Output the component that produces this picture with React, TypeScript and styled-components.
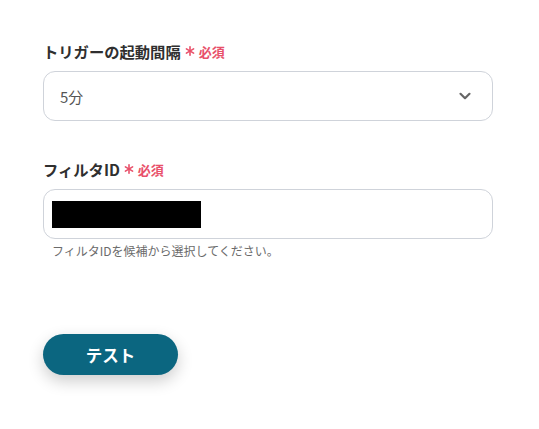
import * as React from 'react';
import styled, { createGlobalStyle } from 'styled-components';

const GlobalStyle = createGlobalStyle`
  body {
    margin: 0;
    background: #fff;
    font-family: "Noto Sans CJK JP", "Noto Sans", sans-serif;
  }
`;

const Page = styled.div`
  width: 539px;
  height: 429px;
  box-sizing: border-box;
  padding: 41px 46px 0 43px;
  display: flex;
  flex-direction: column;
`;

const Field = styled.div<{ $gap?: number }>`
  display: flex;
  flex-direction: column;
  margin-bottom: ${(p) => p.$gap ?? 0}px;
`;

const Label = styled.div`
  display: flex;
  align-items: center;
  height: 20px;
  margin-bottom: 10px;
  font-size: 15.3px;
  font-weight: 700;
  color: #2f2f2f;
`;

const Required = styled.span`
  display: inline-flex;
  align-items: center;
  gap: 4px;
  margin-left: 4px;
  color: #e8506a;
  font-size: 13px;
  font-weight: 700;
`;

const Box = styled.div`
  height: 50px;
  box-sizing: border-box;
  border: 1px solid #cfd3da;
  border-radius: 12px;
  display: flex;
  align-items: center;
  justify-content: space-between;
  padding: 0 20px 0 16px;
  background: #fff;
`;

const Value = styled.span`
  font-size: 15px;
  color: #555;
`;

const Masked = styled.div`
  width: 149px;
  height: 27px;
  background: #000;
  margin-left: -8px;
`;

const Help = styled.div`
  margin-top: 3px;
  padding-left: 9px;
  font-size: 12px;
  line-height: 18px;
  color: #6b6b6b;
`;

const Button = styled.button`
  width: 135px;
  height: 41px;
  border: none;
  border-radius: 21px;
  background: #0b6680;
  color: #fff;
  font-family: inherit;
  font-size: 16.5px;
  font-weight: 700;
  box-shadow: 0 6px 16px rgba(0, 0, 0, 0.2);
  cursor: pointer;
`;

const Star = () => (
  <svg width="10" height="10" viewBox="0 0 10 10">
    <g stroke="#e8506a" strokeWidth="1.6" strokeLinecap="round">
      <line x1="5" y1="0.8" x2="5" y2="9.2" />
      <line x1="1.4" y1="2.9" x2="8.6" y2="7.1" />
      <line x1="1.4" y1="7.1" x2="8.6" y2="2.9" />
    </g>
  </svg>
);

const Chevron = () => (
  <svg width="14" height="14" viewBox="0 0 14 14">
    <path d="M2.5 4.8 L7 9.2 L11.5 4.8" fill="none" stroke="#666" strokeWidth="2.2" strokeLinecap="round" strokeLinejoin="round" />
  </svg>
);

export default function App() {
  return (
    <Page>
      <GlobalStyle />
      <Field $gap={38}>
        <Label>
          トリガーの起動間隔
          <Required>
            <Star />必須
          </Required>
        </Label>
        <Box>
          <Value>5分</Value>
          <Chevron />
        </Box>
      </Field>
      <Field $gap={74}>
        <Label>
          フィルタID
          <Required>
            <Star />必須
          </Required>
        </Label>
        <Box>
          <Masked />
        </Box>
        <Help>フィルタIDを候補から選択してください。</Help>
      </Field>
      <div>
        <Button>テスト</Button>
      </div>
    </Page>
  );
}
